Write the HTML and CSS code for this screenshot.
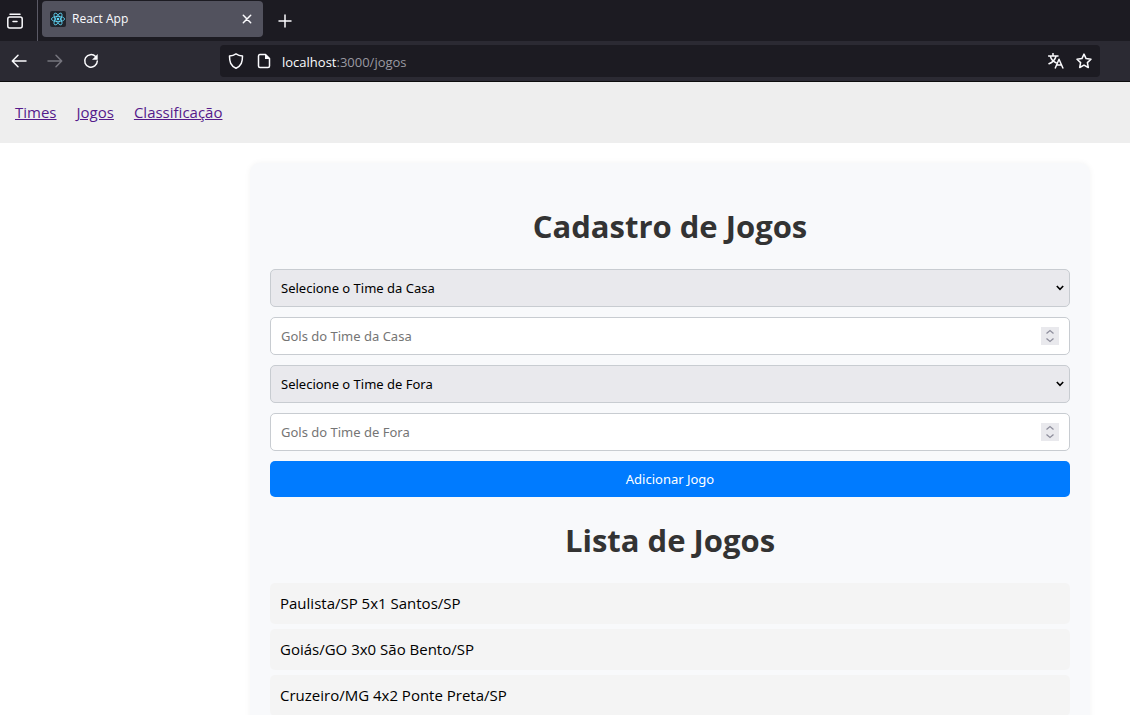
FILE: index.html
```html
<!DOCTYPE html>
<html lang="pt-BR">
<head>
<meta charset="utf-8">
<meta name="viewport" content="width=device-width, initial-scale=1">
<title>React App</title>
<link rel="stylesheet" href="styles.css">
</head>
<body class="window">
<header class="chrome">
  <div class="tab-strip">
    <button class="icon-btn history-btn" type="button" aria-label="Guias recentes">
      <svg class="icon" viewBox="0 0 18 18"><path d="M4 2.2h10"/><rect x="1.8" y="5" width="14.4" height="11" rx="2"/><path d="M7 9.5h4"/></svg>
    </button>
    <div class="tab">
      <svg class="favicon" viewBox="0 0 16 16"><rect width="16" height="16" rx="2" fill="#20232a"/><g fill="none" stroke="#61dafb" stroke-width=".8"><ellipse cx="8" cy="8" rx="6.6" ry="2.6"/><ellipse cx="8" cy="8" rx="6.6" ry="2.6" transform="rotate(60 8 8)"/><ellipse cx="8" cy="8" rx="6.6" ry="2.6" transform="rotate(120 8 8)"/></g><circle cx="8" cy="8" r="1.3" fill="#61dafb"/></svg>
      <span class="tab-title">React App</span>
      <button class="icon-btn tab-close" type="button" aria-label="Fechar guia">
        <svg class="icon-small" viewBox="0 0 10 10"><path d="M1.3 1.3l7.4 7.4M8.7 1.3L1.3 8.7"/></svg>
      </button>
    </div>
    <button class="icon-btn new-tab" type="button" aria-label="Nova guia">
      <svg class="icon-plus" viewBox="0 0 14 14"><path d="M7 1v12M1 7h12"/></svg>
    </button>
  </div>
  <div class="toolbar">
    <div class="nav-buttons">
      <button class="icon-btn" type="button" aria-label="Voltar"><svg class="icon-nav" viewBox="0 0 16 16"><path d="M15 8H1.5M7 2.3L1.3 8 7 13.7"/></svg></button>
      <button class="icon-btn dim" type="button" aria-label="Avançar"><svg class="icon-nav" viewBox="0 0 16 16"><path d="M1 8h13.5M9 2.3L14.7 8 9 13.7"/></svg></button>
      <button class="icon-btn" type="button" aria-label="Recarregar"><svg class="icon-nav" viewBox="0 0 16 16"><path d="M12.6 3.6A6.3 6.3 0 1 0 14.3 8"/><path class="solid" d="M14.7 1v5.7H9z"/></svg></button>
    </div>
    <div class="address-bar">
      <svg class="icon-nav" viewBox="0 0 16 16"><path d="M8 .9c2 1.4 4.2 2 6.5 2.2 0 5.700-1 9.500-6.500 12.100C2.500 12.600 1.500 8.800 1.500 3.100 3.800 2.900 6 2.300 8 .9z"/></svg>
      <svg class="icon-nav" viewBox="0 0 16 16"><path d="M3.800 1.500H9.500l4 4v7.500a1.500 1.500 0 0 1-1.500 1.500H4A1.500 1.500 0 0 1 2.500 13V3a1.500 1.500 0 0 1 1.300-1.500z"/><path class="solid" d="M9 1v5h5z"/></svg>
      <span class="address"><span class="host">localhost</span>:3000/jogos</span>
      <button class="icon-btn" type="button" aria-label="Traduzir"><svg class="icon-nav" viewBox="0 0 16 16"><path d="M.5 3h9.500M5 .5V3M2.300 3.200C3.300 6.500 5.500 8.700 8 9.700M8 3.200C7 7 4.500 9.300 1 10.800M7.300 15l3.700-8.800L14.900 15M8.700 12h4.900"/></svg></button>
      <button class="icon-btn" type="button" aria-label="Adicionar aos favoritos"><svg class="icon-nav" viewBox="0 0 16 16"><path d="M8 1.100l2.100 4.500 4.900.6-3.600 3.400.9 4.900L8 12.100l-4.300 2.400.9-4.900L1 6.200l4.900-.6z"/></svg></button>
    </div>
  </div>
</header>
<div class="page">
  <nav class="menu">
    <a href="/times">Times</a>
    <a href="/jogos">Jogos</a>
    <a href="/classificacao">Classificação</a>
  </nav>
  <main class="card">
    <h1 class="title">Cadastro de Jogos</h1>
    <form class="form">
      <select class="field select" aria-label="Time da Casa"><option>Selecione o Time da Casa</option></select>
      <input class="field number" type="number" placeholder="Gols do Time da Casa" aria-label="Gols do Time da Casa">
      <select class="field select" aria-label="Time de Fora"><option>Selecione o Time de Fora</option></select>
      <input class="field number" type="number" placeholder="Gols do Time de Fora" aria-label="Gols do Time de Fora">
      <button class="submit" type="submit">Adicionar Jogo</button>
    </form>
    <h1 class="title">Lista de Jogos</h1>
    <ul class="games">
      <li>Paulista/SP 5x1 Santos/SP</li>
      <li>Goiás/GO 3x0 São Bento/SP</li>
      <li>Cruzeiro/MG 4x2 Ponte Preta/SP</li>
    </ul>
  </main>
</div>
</body>
</html>
```
FILE: styles.css
```css
* { box-sizing: border-box; }

.window {
  margin: 0;
  height: 100vh;
  display: flex;
  flex-direction: column;
  overflow: hidden;
  background: #fff;
  font-family: "Open Sans", "Noto Sans", sans-serif;
  font-size: 15px;
  line-height: 21px;
  color: #000;
}

.chrome { flex: none; background: #2b2a33; color: #fbfbfe; border-bottom: 1px solid #0c0c0d; }
.tab-strip { display: flex; align-items: center; height: 41px; background: #1c1b22; }
.icon-btn {
  display: flex;
  align-items: center;
  justify-content: center;
  padding: 0;
  border: 0;
  background: none;
  color: inherit;
}
.chrome svg { display: block; flex: none; }
.icon, .icon-small, .icon-plus, .icon-nav { fill: none; stroke: currentColor; stroke-width: 1.5; stroke-linejoin: round; stroke-linecap: round; }
.icon { width: 18px; height: 18px; }
.icon-small { width: 10px; height: 10px; }
.icon-plus { width: 14px; height: 14px; }
.icon-nav { width: 16px; height: 16px; }
.solid { fill: currentColor; stroke: none; }
.history-btn { width: 38px; height: 41px; padding-right: 8px; border-right: 1px solid #5b5a66; }
.tab {
  display: flex;
  align-items: center;
  gap: 6px;
  width: 221px;
  height: 36px;
  margin: 0 14px 4px 4px;
  padding: 0 10px 0 8px;
  border-radius: 4px;
  background: #52525e;
}
.favicon { width: 16px; height: 16px; }
.tab-title { flex: 1; font-size: 12px; }
.tab-close { width: 12px; height: 20px; }
.new-tab { width: 16px; height: 24px; }

.toolbar { display: flex; align-items: center; height: 40px; padding-right: 30px; }
.nav-buttons { display: flex; gap: 20px; width: 220px; padding-left: 11px; }
.dim { color: #76757e; }
.address-bar {
  flex: 1;
  display: flex;
  align-items: center;
  gap: 12px;
  height: 32px;
  padding: 0 8px;
  border-radius: 4px;
  background: #1c1b22;
}
.address { flex: 1; margin-left: -2px; padding-top: 2px; font-size: 13px; color: #9a99a1; }
.host { color: #fbfbfe; }

.page { flex: 1; min-height: 0; overflow: hidden; }
.menu { display: flex; gap: 20px; padding: 20px 15px; background: #eee; }
.menu a { color: #551a8b; }

.card {
  max-width: 840px;
  margin: 20px 40px 20px auto;
  padding: 20px;
  border-radius: 10px;
  background: #f8f9fb;
  box-shadow: 0 0 6px rgba(0, 0, 0, 0.05);
}
.title {
  margin: 21px 0;
  font-size: 31px;
  font-weight: 700;
  line-height: 44px;
  text-align: center;
  color: #333;
}
.form { display: flex; flex-direction: column; gap: 10px; }
.field {
  width: 100%;
  height: 38px;
  padding: 0 10px;
  border: 1px solid #c8ccd1;
  border-radius: 5px;
  font-family: "Noto Sans", sans-serif;
  font-size: 13px;
  color: #000;
}
.select {
  appearance: none;
  background: #e9e9ed url("data:image/svg+xml,%3Csvg xmlns='http://www.w3.org/2000/svg' width='8' height='6'%3E%3Cpath d='M.8 1L4 4.300 7.200 1' fill='none' stroke='%23000' stroke-width='1.600'/%3E%3C/svg%3E") no-repeat right 5px center;
}
.number { background: #fff; }
.number::placeholder { color: #757575; opacity: 1; }
.number::-webkit-inner-spin-button {
  appearance: none;
  width: 18px;
  height: 18px;
  opacity: 1;
  background: #e9e9ed url("data:image/svg+xml,%3Csvg xmlns='http://www.w3.org/2000/svg' width='18' height='18'%3E%3Cpath d='M5.500 6.500L9 3.500l3.500 3M5.500 11.500L9 14.500l3.500-3' fill='none' stroke='%238f8f9d' stroke-width='1.300'/%3E%3C/svg%3E") no-repeat center;
}
.submit {
  height: 36px;
  border: 0;
  border-radius: 5px;
  background: #007bff;
  color: #fff;
  font-family: "Noto Sans", sans-serif;
  font-size: 13px;
}
.games { display: flex; flex-direction: column; gap: 5px; margin: 0; padding: 0; list-style: none; }
.games li { padding: 10px; border-radius: 5px; background: #f4f4f4; }
```
